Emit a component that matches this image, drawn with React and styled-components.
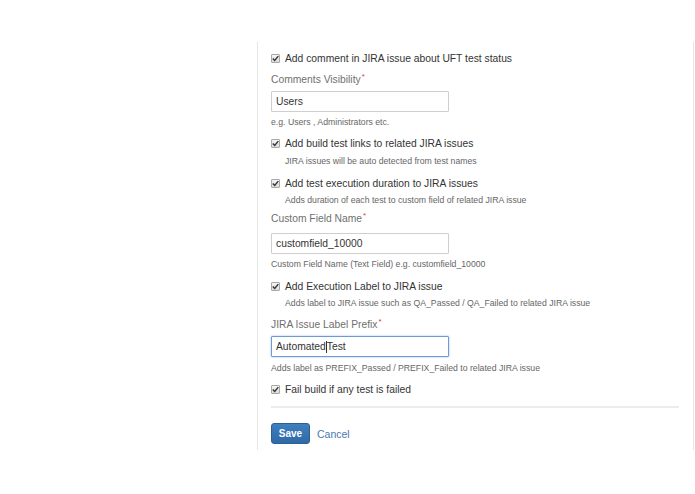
import React from "react";
import styled, { createGlobalStyle } from "styled-components";

const Global = createGlobalStyle`
  html, body { margin: 0; padding: 0; background: #fff; }
  body { font-family: "Liberation Sans", Arial, sans-serif; color: #333; }
`;

const Page = styled.div`
  width: 695px;
  height: 494px;
  padding-top: 42px;
  box-sizing: border-box;
`;

const Panel = styled.div`
  margin-left: 257px;
  width: 437px;
  height: 408px;
  box-sizing: border-box;
  border-left: 1px solid #e6e6e6;
  border-right: 1px solid #e6e6e6;
  padding: 9px 14px 0 13px;
  display: flex;
  flex-direction: column;
`;

const CheckRow = styled.div`
  display: flex;
  align-items: center;
  gap: 5px;
  height: 14px;
  font-size: 10.3px;
  color: #333;
  margin-top: ${(p) => p.$mt || 0}px;
`;

const Box = styled.span`
  width: 7px;
  height: 7px;
  border: 1px solid #a8a8a8;
  border-radius: 1px;
  background: linear-gradient(#f4f4f4, #dcdcdc);
  display: inline-flex;
  align-items: center;
  justify-content: center;
  flex: none;
`;

const Desc = styled.div`
  padding-left: 14px;
  font-size: 8.7px;
  line-height: 12px;
  color: #666;
  margin-top: ${(p) => p.$mt || 0}px;
`;

const Label = styled.div`
  font-size: 10.3px;
  line-height: 14px;
  color: #707070;
  margin-top: ${(p) => p.$mt || 0}px;
`;

const Req = styled.sup`
  color: #d04437;
  font-size: 8px;
  line-height: 0;
  vertical-align: 4px;
  margin-left: 1px;
`;

const Field = styled.div`
  width: 178px;
  height: 21px;
  box-sizing: border-box;
  border: 1px solid ${(p) => (p.$focus ? "#6d9ad6" : "#cfcfcf")};
  box-shadow: ${(p) => (p.$focus ? "0 0 2px rgba(80,140,220,0.6)" : "none")};
  border-radius: 1px;
  padding: 0 4px;
  display: flex;
  align-items: center;
  font-size: 10.3px;
  color: #333;
  margin-top: ${(p) => p.$mt || 0}px;
`;

const Caret = styled.span`
  display: inline-block;
  width: 1px;
  height: 12px;
  background: #333;
`;

const Help = styled.div`
  font-size: 8.7px;
  line-height: 12px;
  color: #666;
  margin-top: ${(p) => p.$mt || 0}px;
`;

const Divider = styled.div`
  height: 2px;
  background: #ececec;
  margin-top: 10px;
`;

const Actions = styled.div`
  display: flex;
  align-items: center;
  gap: 7px;
  margin-top: 15px;
`;

const SaveButton = styled.button`
  width: 39px;
  height: 21px;
  border: 1px solid #2c5f94;
  border-radius: 3px;
  background: linear-gradient(#3f7fc0, #2f6aa6);
  color: #fff;
  font-family: "Liberation Sans", Arial, sans-serif;
  font-weight: bold;
  font-size: 10px;
  padding: 0;
`;

const CancelLink = styled.a`
  font-size: 10.5px;
  color: #4a78b0;
  text-decoration: none;
`;

const Check = () => (
  <Box>
    <svg width="7" height="7" viewBox="0 0 7 7">
      <path d="M0.8 3.6 L2.7 5.5 L6.3 1.1" fill="none" stroke="#333" strokeWidth="1.4" />
    </svg>
  </Box>
);

export default function App() {
  return (
    <Page>
      <Global />
      <Panel>
        <CheckRow>
          <Check />
          Add comment in JIRA issue about UFT test status
        </CheckRow>
        <Label $mt={8}>
          Comments Visibility<Req>*</Req>
        </Label>
        <Field $mt={4}>Users</Field>
        <Help $mt={4}>e.g. Users , Administrators etc.</Help>

        <CheckRow $mt={8}>
          <Check />
          Add build test links to related JIRA issues
        </CheckRow>
        <Desc $mt={5}>JIRA issues will be auto detected from test names</Desc>

        <CheckRow $mt={9}>
          <Check />
          Add test execution duration to JIRA issues
        </CheckRow>
        <Desc $mt={4}>Adds duration of each test to custom field of related JIRA issue</Desc>

        <Label $mt={6}>
          Custom Field Name<Req>*</Req>
        </Label>
        <Field $mt={7}>customfield_10000</Field>
        <Help $mt={4}>Custom Field Name (Text Field) e.g. customfield_10000</Help>

        <CheckRow $mt={9}>
          <Check />
          Add Execution Label to JIRA issue
        </CheckRow>
        <Desc $mt={4}>Adds label to JIRA issue such as QA_Passed / QA_Failed to related JIRA issue</Desc>

        <Label $mt={9}>
          JIRA Issue Label Prefix<Req>*</Req>
        </Label>
        <Field $mt={4} $focus>
          Automated
          <Caret />
          Test
        </Field>
        <Help $mt={5}>Adds label as PREFIX_Passed / PREFIX_Failed to related JIRA issue</Help>

        <CheckRow $mt={8}>
          <Check />
          Fail build if any test is failed
        </CheckRow>
        <Divider />
        <Actions>
          <SaveButton>Save</SaveButton>
          <CancelLink href="#">Cancel</CancelLink>
        </Actions>
      </Panel>
    </Page>
  );
}
